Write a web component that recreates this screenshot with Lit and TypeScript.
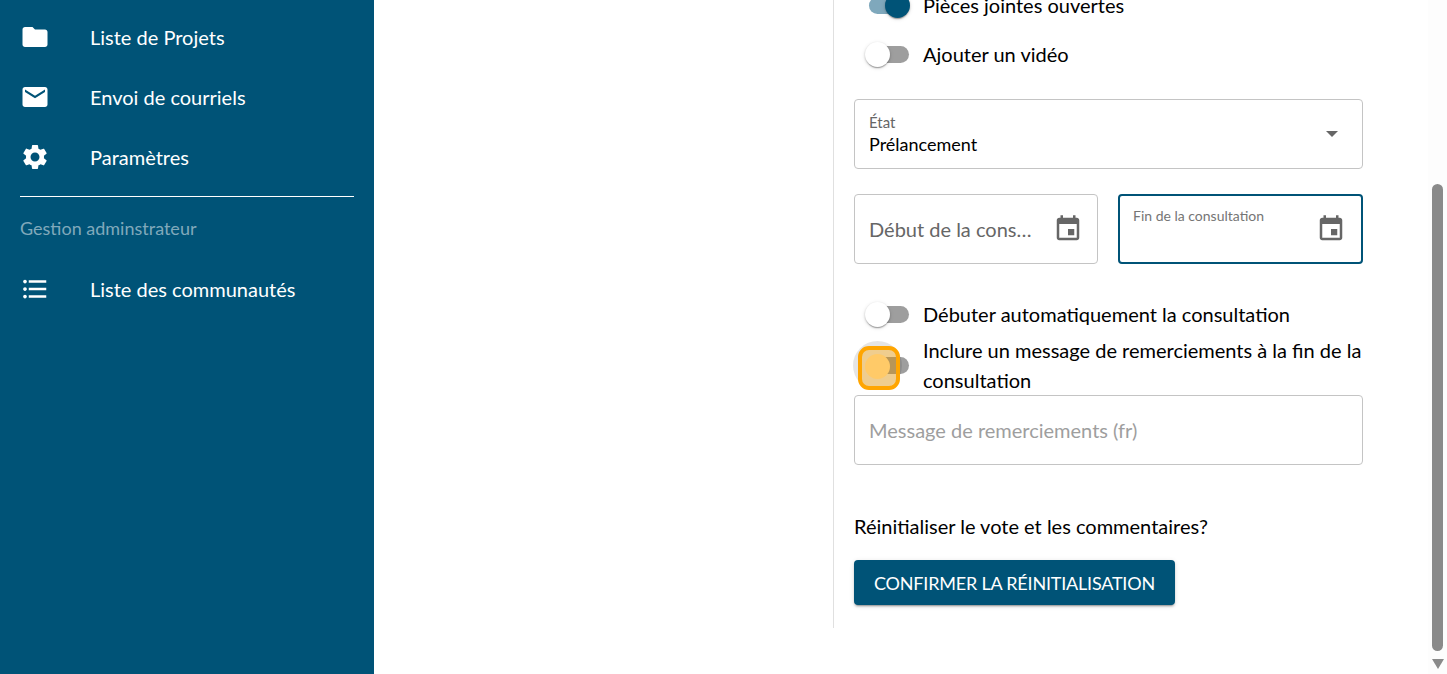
import { LitElement, html, css, svg } from "lit";
import { customElement } from "lit/decorators.js";

const ICONS: Record<string, string> = {
  folder: "M10 4H4c-1.1 0-1.99.9-1.99 2L2 18c0 1.1.9 2 2 2h16c1.1 0 2-.9 2-2V8c0-1.1-.9-2-2-2h-8l-2-2z",
  mail: "M20 4H4c-1.1 0-1.99.9-1.99 2L2 18c0 1.1.9 2 2 2h16c1.1 0 2-.9 2-2V6c0-1.1-.9-2-2-2zm0 4l-8 5-8-5V6l8 5 8-5v2z",
  gear: "M19.14 12.94c.04-.3.06-.61.06-.94 0-.32-.02-.64-.07-.94l2.03-1.58c.18-.14.23-.41.12-.61l-1.92-3.32c-.12-.22-.37-.29-.59-.22l-2.39.96c-.5-.38-1.03-.7-1.62-.94l-.36-2.54c-.04-.24-.24-.41-.48-.41h-3.84c-.24 0-.43.17-.47.41l-.36 2.54c-.59.24-1.13.57-1.62.94l-2.39-.96c-.22-.08-.47 0-.59.22L2.74 8.87c-.12.21-.08.47.12.61l2.03 1.58c-.05.3-.09.63-.09.94s.02.64.07.94l-2.03 1.58c-.18.14-.23.41-.12.61l1.92 3.32c.12.22.37.29.59.22l2.39-.96c.5.38 1.03.7 1.62.94l.36 2.54c.05.24.24.41.48.41h3.84c.24 0 .44-.17.47-.41l.36-2.54c.59-.24 1.13-.56 1.62-.94l2.39.96c.22.08.47 0 .59-.22l1.92-3.32c.12-.22.07-.47-.12-.61l-2.01-1.58zM12 15.6c-1.98 0-3.6-1.62-3.6-3.6s1.62-3.6 3.6-3.6 3.6 1.62 3.6 3.6-1.62 3.6-3.6 3.6z",
  list: "M4 10.5c-.83 0-1.5.67-1.5 1.5s.67 1.5 1.5 1.5 1.5-.67 1.5-1.5-.67-1.5-1.5-1.5zm0-6c-.83 0-1.5.67-1.5 1.5S3.17 7.5 4 7.5 5.5 6.83 5.5 6 4.83 4.5 4 4.5zm0 12c-.83 0-1.5.68-1.5 1.5s.68 1.5 1.5 1.5 1.5-.68 1.5-1.5-.67-1.5-1.5-1.5zM7 19h14v-2H7v2zm0-6h14v-2H7v2zm0-8v2h14V5H7z",
  event: "M17 12h-5v5h5v-5zM16 1v2H8V1H6v2H5c-1.11 0-1.99.9-1.99 2L3 19c0 1.1.89 2 2 2h14c1.1 0 2-.9 2-2V5c0-1.1-.9-2-2-2h-1V1h-2zm3 18H5V8h14v11z",
};

const icon = (name: string) =>
  html`<svg class="icon" viewBox="0 0 24 24" fill="currentColor">${svg`<path d=${ICONS[name]}></path>`}</svg>`;

@customElement("app-root")
export class AppRoot extends LitElement {
  static styles = css`
    :host { display: block; font-family: "Lato", "Liberation Sans", sans-serif; color: #000; }
    * { box-sizing: border-box; }
    .page { display: flex; height: 674px; overflow: hidden; background: #fff; }
    .icon { width: 30px; height: 30px; display: block; flex: none; }

    .side { width: 374px; flex: none; background: #005377; color: #fff; padding: 7px 20px 0; }
    .item { display: flex; align-items: center; height: 60px; gap: 40px; font-size: 20px; }
    .rule { height: 1px; background: #fff; margin-top: 9px; }
    .sub { font-size: 18px; color: #80a9bb; line-height: 22px; margin: 20px 0 20px; }

    .gap { width: 459px; flex: none; }
    .panel {
      width: 530px; height: 628px; flex: none; border-left: 1px solid #e0e0e0;
      padding: 0 0 0 20px; display: flex; flex-direction: column; align-items: flex-start;
      width: 530px;
    }
    .form { width: 509px; display: flex; flex-direction: column; }

    .toggle { display: flex; align-items: center; font-size: 20px; line-height: 30px; gap: 14px; padding-left: 15px; }
    .toggle.first { margin-top: -20px; height: 50px; }
    .toggle.second { height: 50px; margin-top: -1px; }
    .sw { position: relative; width: 40px; height: 17px; border-radius: 9px; background: #9e9e9e; flex: none; }
    .thumb {
      position: absolute; left: -4px; top: -4px; width: 25px; height: 25px; border-radius: 50%;
      background: #fff; box-shadow: 0 2px 1px -1px rgba(0,0,0,.2), 0 1px 2px 0 rgba(0,0,0,.2), 0 1px 4px 0 rgba(0,0,0,.12);
    }
    .sw.on { background: #7fa8bc; }
    .sw.on .thumb { left: 16px; background: #005377; }
    .halo { position: absolute; left: -16px; top: -16px; width: 49px; height: 49px; border-radius: 50%; background: rgba(0,0,0,.1); }
    .ring {
      position: absolute; left: -11px; top: -11px; width: 42px; height: 44px; border-radius: 11px;
      border: 4px solid #ffa500; background: rgba(255,165,0,.38);
    }
    .sw.focus .thumb { background: #ffe0a8; box-shadow: none; left: -4px; top: -3px; }

    .field {
      height: 70px; border: 1px solid #c4c4c4; border-radius: 4px; display: flex; align-items: center;
      padding: 0 14px; font-size: 20px; color: #666; background: #fff;
    }
    .select { margin-top: 20px; justify-content: space-between; padding-right: 22px; }
    .select .lab { font-size: 15px; line-height: 18px; color: #666; margin-top: 2px; }
    .select .val { font-size: 18px; line-height: 26px; color: #000; }
    .caret { width: 0; height: 0; border: 6px solid transparent; border-top: 6px solid #666; border-bottom: 0; margin-right: 2px; }

    .dates { display: grid; grid-template-columns: 244px 245px; gap: 20px; margin-top: 25px; }
    .date { justify-content: space-between; padding-right: 14px; }
    .date .ph { white-space: nowrap; }
    .date.active { border: 2px solid #005377; align-items: flex-start; padding: 11px 15px 0 13px; }
    .date.active .lab { font-size: 14px; line-height: 18px; color: #757575; }
    .date.active .icon { margin-top: 7px; }
    .date .icon { color: #666; }

    .t3 { height: 50px; margin-top: 25px; }
    .t4 { height: 60px; margin-top: -4px; padding-top: 0; align-items: center; }
    .t4 .sw { top: 0; }
    .msg { color: #9e9e9e; }
    .form .msg { margin-top: 0; }
    .reset { font-size: 20px; line-height: 30px; margin-top: 46px; }
    .btn {
      width: 321px; height: 45px; margin-top: 19px; border: 0; border-radius: 4px; background: #005377; color: #fff;
      font: 18px "Lato", sans-serif; letter-spacing: -0.2px; text-transform: uppercase;
      box-shadow: 0 3px 1px -2px rgba(0,0,0,.2), 0 2px 2px 0 rgba(0,0,0,.14), 0 1px 5px 0 rgba(0,0,0,.12);
      padding: 0;
    }

    .bar { flex: 1; background: #fdfdfd; padding: 184px 0 0 4px; margin-left: 65px; min-width: 0; display: flex; flex-direction: column; }
    .bar-thumb { width: 11px; height: 467px; border-radius: 6px; background: #8a8a8a; }
    .bar-arrow { width: 0; height: 0; border: 6px solid transparent; border-top: 10px solid #8a8a8a; border-bottom: 0; margin-top: 8px; }
  `;

  render() {
    return html`
      <div class="page">
        <nav class="side">
          <div class="item">${icon("folder")}<span>Liste de Projets</span></div>
          <div class="item">${icon("mail")}<span>Envoi de courriels</span></div>
          <div class="item">${icon("gear")}<span>Paramètres</span></div>
          <div class="rule"></div>
          <div class="sub">Gestion adminstrateur</div>
          <div class="item">${icon("list")}<span>Liste des communautés</span></div>
        </nav>
        <div class="gap"></div>
        <section class="panel">
          <div class="form">
            <label class="toggle first"><span class="sw on"><span class="thumb"></span></span><span>Pièces jointes ouvertes</span></label>
            <label class="toggle second"><span class="sw"><span class="thumb"></span></span><span>Ajouter un vidéo</span></label>
            <div class="field select">
              <div><div class="lab">État</div><div class="val">Prélancement</div></div>
              <span class="caret"></span>
            </div>
            <div class="dates">
              <div class="field date"><span class="ph">Début de la cons…</span>${icon("event")}</div>
              <div class="field date active"><span class="lab">Fin de la consultation</span>${icon("event")}</div>
            </div>
            <label class="toggle t3"><span class="sw"><span class="thumb"></span></span><span>Débuter automatiquement la consultation</span></label>
            <label class="toggle t4"><span class="sw focus"><span class="halo"></span><span class="thumb"></span><span class="ring"></span></span><span>Inclure un message de remerciements à la fin de la consultation</span></label>
            <div class="field msg">Message de remerciements (fr)</div>
            <div class="reset">Réinitialiser le vote et les commentaires?</div>
            <button class="btn">Confirmer la réinitialisation</button>
          </div>
        </section>
        <div class="bar"><div class="bar-thumb"></div><div class="bar-arrow"></div></div>
      </div>
    `;
  }
}
